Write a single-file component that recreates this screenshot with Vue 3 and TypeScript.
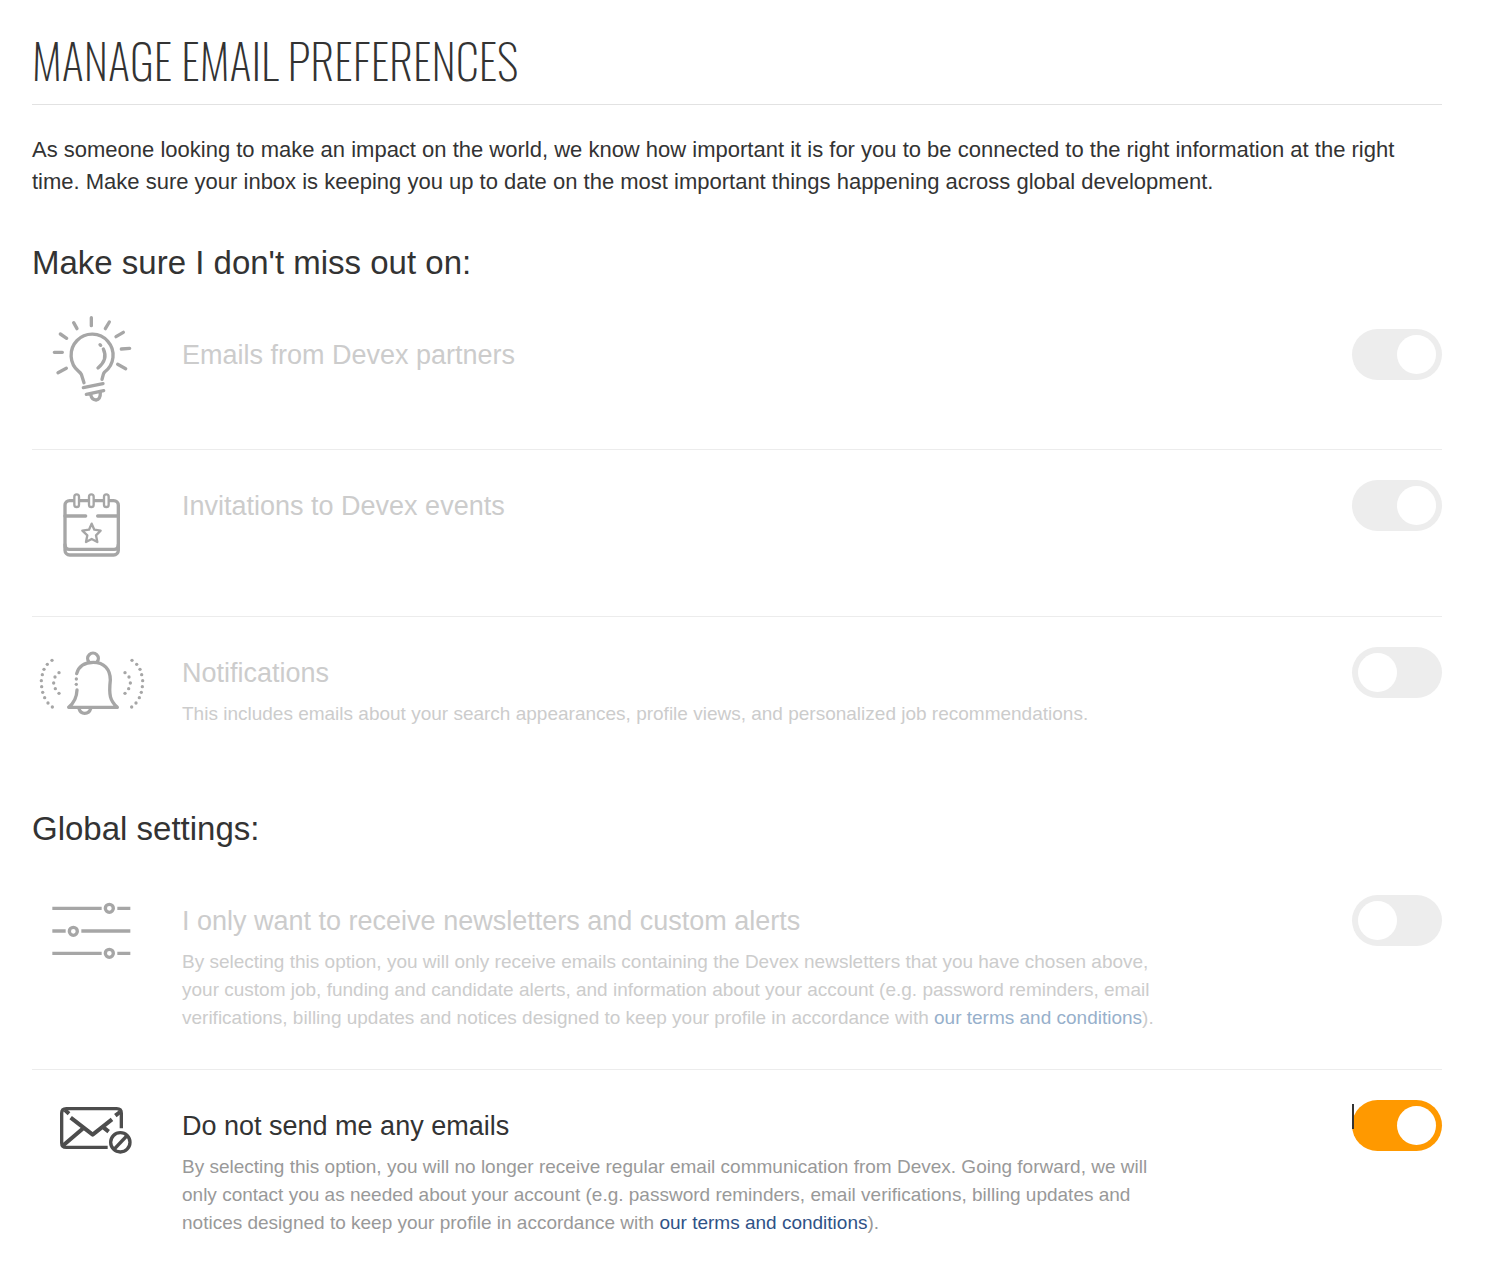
<script setup lang="ts">
import { reactive } from 'vue'

type IconName = 'bulb' | 'calendar' | 'bell' | 'sliders' | 'envelope'

interface Preference {
  id: string
  icon: IconName
  title: string
  text?: string
  link?: string
  on: boolean
  disabled: boolean
}

interface Group {
  heading: string
  items: Preference[]
}

const viewBoxes: Record<IconName, string> = {
  bulb: '6 12 360 318',
  calendar: '6 -60 360 318',
  bell: '6 -39 360 318',
  sliders: '6 -45 360 318',
  envelope: '6 -30 360 318',
}

const leftDots = [
  [66, 61], [52, 73], [42, 88], [37, 104], [34, 122], [35, 140], [38, 157], [44, 173], [54, 189], [67, 201],
  [87, 98], [75, 111], [71, 129], [76, 146], [87, 160],
]
const bellDots = [...leftDots, ...leftDots.map(([x, y]) => [372 - x, y]), [139, 117], [139, 133]]

const groups = reactive<Group[]>([
  {
    heading: "Make sure I don't miss out on:",
    items: [
      { id: 'partners', icon: 'bulb', title: 'Emails from Devex partners', on: true, disabled: true },
      { id: 'events', icon: 'calendar', title: 'Invitations to Devex events', on: true, disabled: true },
      {
        id: 'notifications',
        icon: 'bell',
        title: 'Notifications',
        text: 'This includes emails about your search appearances, profile views, and personalized job recommendations.',
        on: false,
        disabled: true,
      },
    ],
  },
  {
    heading: 'Global settings:',
    items: [
      {
        id: 'newsletters',
        icon: 'sliders',
        title: 'I only want to receive newsletters and custom alerts',
        text: 'By selecting this option, you will only receive emails containing the Devex newsletters that you have chosen above, your custom job, funding and candidate alerts, and information about your account (e.g. password reminders, email verifications, billing updates and notices designed to keep your profile in accordance with ',
        link: 'our terms and conditions',
        on: false,
        disabled: true,
      },
      {
        id: 'none',
        icon: 'envelope',
        title: 'Do not send me any emails',
        text: 'By selecting this option, you will no longer receive regular email communication from Devex. Going forward, we will only contact you as needed about your account (e.g. password reminders, email verifications, billing updates and notices designed to keep your profile in accordance with ',
        link: 'our terms and conditions',
        on: true,
        disabled: false,
      },
    ],
  },
])
</script>

<template>
  <main class="page">
    <h1 class="page-title">MANAGE EMAIL PREFERENCES</h1>
    <p class="intro">
      As someone looking to make an impact on the world, we know how important it is for you to be connected to the
      right information at the right time. Make sure your inbox is keeping you up to date on the most important things
      happening across global development.
    </p>

    <section v-for="group in groups" :key="group.heading" class="group">
      <h2 class="group-title">{{ group.heading }}</h2>
      <div
        v-for="item in group.items"
        :key="item.id"
        class="row"
        :class="[`row-${item.icon}`, { disabled: item.disabled }]"
      >
        <svg class="icon" :viewBox="viewBoxes[item.icon]" aria-hidden="true">
          <g v-if="item.icon === 'bulb'">
            <path d="M184 38V62M131 53L141 71M91 87L110 100M73 142H97M84 203L109 190M238 51L226 71M280 82L258 95M299 130L274 132M263 178L287 191" />
            <path d="M162 233L154 208Q151 203 146 199A63 63 0 1 1 224 201Q221 204 220 208L216 223" />
            <path d="M220 132Q235 163 204 189M210 119L212 121" />
            <path d="M160 248L219 236M169 268L221 257M182 268Q185 285 198 285Q212 283 211 262" />
          </g>
          <g v-else-if="item.icon === 'calendar'">
            <rect x="105" y="62" width="160" height="163" rx="14" />
            <path d="M105 108H167M203 108H265M105 194Q105 208 118 208H252Q265 208 265 194" />
            <rect v-for="x in [133, 177, 222]" :key="x" class="ring" :x="x" y="43" width="14" height="38" rx="7" />
            <path class="thin" d="M185 131L193 149L212 152L198 166L202 186L185 177L168 186L172 166L157 152L177 149Z" />
          </g>
          <g v-else-if="item.icon === 'bell'">
            <path d="M177 66A16 16 0 1 1 201 66" />
            <path d="M140 101C146 78 165 67 190 67C222 67 241 88 241 120C236 165 240 182 262 202H116Q140 182 141 150" />
            <path d="M147 206Q151 220 164 220Q178 220 182 206" />
            <circle v-for="(dot, i) in bellDots" :key="i" class="dot" :cx="dot[0]" :cy="dot[1]" r="5" />
          </g>
          <g v-else-if="item.icon === 'sliders'" class="flat">
            <path d="M67 55H215M262 55H301M67 123H107M154 123H301M67 190H215M262 190H301" />
            <circle cx="238" cy="55" r="12" />
            <circle cx="130" cy="124" r="12" />
            <circle cx="238" cy="190" r="12" />
          </g>
          <g v-else class="flat">
            <path d="M274 115V70Q274 56 260 56H109Q95 56 95 70V158Q95 172 109 172H233" />
            <path class="bold" d="M122 83L188 134L246 88M105 60L117 71M256 77L270 66M100 166L158 116M220 112L236 125" />
            <circle cx="271" cy="157" r="29" />
            <path d="M252 178L290 138" />
          </g>
        </svg>
        <div class="body">
          <label class="title" :for="item.id">{{ item.title }}</label>
          <p v-if="item.text" class="text">
            {{ item.text }}<template v-if="item.link"><a href="#terms">{{ item.link }}</a>).</template>
          </p>
        </div>
        <div class="switch">
          <input :id="item.id" v-model="item.on" type="checkbox" class="toggle" :disabled="item.disabled" />
          <span v-if="!item.disabled" class="caret"></span>
        </div>
      </div>
    </section>
  </main>
</template>

<style>
body {
  margin: 0;
  background: #fff;
}
</style>

<style scoped>
.page {
  box-sizing: border-box;
  padding: 16px 48px 44px 32px;
  font-family: "Liberation Sans", Arial, sans-serif;
  color: #333;
}

.page-title {
  margin: 0;
  border-bottom: 1px solid #e2e2e2;
  font-family: Oswald, "Roboto Condensed", "Liberation Sans", sans-serif;
  font-size: 47px;
  font-weight: 240;
  line-height: 88px;
}

.intro {
  margin: 29px 0 0;
  font-size: 22px;
  line-height: 32px;
}

.group {
  margin-top: 45px;
}

.group-title {
  margin: 0 0 16px;
  font-size: 33px;
  font-weight: 400;
  line-height: 40px;
}

.row {
  display: flex;
  align-items: flex-start;
  box-sizing: border-box;
}

.row + .row {
  border-top: 1px solid #ececec;
}

.row-bulb {
  min-height: 150px;
}

.row-calendar {
  min-height: 167px;
}

.icon {
  flex: none;
  width: 120px;
  height: 106px;
  margin: 10px 30px 0 0;
  fill: none;
  stroke: #4d4d4d;
  stroke-width: 10;
  stroke-linecap: round;
  stroke-linejoin: round;
}

.disabled .icon {
  stroke: #a6a6a6;
}

.icon .flat {
  stroke-linecap: butt;
}

.icon .bold {
  stroke-width: 12;
}

.icon .ring {
  fill: #fff;
  stroke-width: 7;
}

.icon .thin {
  stroke-width: 7;
}

.icon .dot {
  fill: #a6a6a6;
  stroke: none;
}

.body {
  flex: 1;
  padding: 30px 0 36px;
}

.title {
  display: block;
  font-size: 27px;
  line-height: 53px;
}

.text {
  max-width: 1000px;
  margin: 0;
  color: #999;
  font-size: 19px;
  line-height: 28px;
}

.text a {
  color: #2f5287;
  text-decoration: none;
}

.disabled .title,
.disabled .text {
  color: #ccc;
}

.disabled .text a {
  color: #97b0cb;
}

.row-bell .body,
.row-sliders .body {
  padding-bottom: 37px;
}

.group + .group {
  margin-top: 44px;
}

.switch {
  position: relative;
  flex: none;
  margin-top: 30px;
}

.toggle {
  display: block;
  appearance: none;
  box-sizing: border-box;
  width: 90px;
  height: 51px;
  margin: 0;
  padding: 6px;
  border-radius: 26px;
  background: #ededed;
}

.toggle::before {
  content: "";
  display: block;
  width: 39px;
  height: 39px;
  border-radius: 50%;
  background: #fff;
}

.toggle:checked {
  background: #f90;
}

.toggle:checked::before {
  margin-left: auto;
}

.toggle:disabled {
  background: #ededed;
}

.caret {
  position: absolute;
  top: 4px;
  left: 0;
  width: 2px;
  height: 25px;
  background: #333;
}
</style>
